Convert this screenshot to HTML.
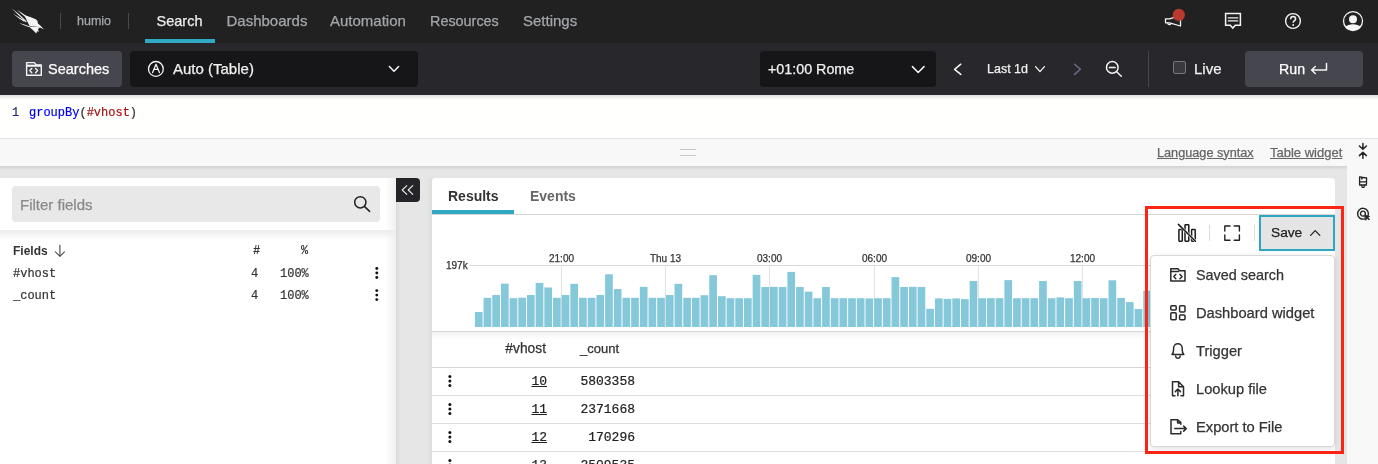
<!DOCTYPE html>
<html><head><meta charset="utf-8">
<style>
*{box-sizing:border-box;margin:0;padding:0}
html,body{width:1378px;height:464px;overflow:hidden;background:#e6e6e6;font-family:"Liberation Sans",sans-serif}
body{will-change:transform}
.a{position:absolute}
.t{position:absolute;line-height:1;white-space:pre;-webkit-text-stroke:0.25px currentColor}
.m{font-family:"Liberation Mono",monospace;-webkit-text-stroke:0.2px currentColor}
.b{font-weight:bold;-webkit-text-stroke:0}
svg{position:absolute;overflow:visible}
</style></head><body>

<!-- TOP NAV -->
<div class="a" style="left:0;top:0;width:1378px;height:43px;background:#212121"></div>
<svg style="left:0;top:0" width="60" height="43" viewBox="0 0 60 43">
  <g fill="#f4f4f4">
    <path d="M11.8 8.6 Q19 13.5 26.8 21.4 L25.9 22.3 Q18.3 15.2 11.8 8.6 Z"/>
    <path d="M16.8 9.8 Q22.5 13 28 17.3 L27 18.4 Q21.7 14.2 16.8 9.8 Z"/>
    <path d="M13 13.4 Q19 17.2 25 20.8 L24.2 21.8 Q18.2 18.2 13 13.4 Z"/>
    <path d="M24.2 15 Q30.5 16.8 35.8 19.2 Q38.2 20.8 37.9 23.4 Q41 25.6 44 29.4 Q41 28 38.4 27 L29.6 26 Q27.2 21.5 24.2 15 Z"/>
    <path d="M28.8 26.6 L40.2 27.2 Q38.2 28.4 38 29.8 L39 31.8 L37 31.2 L36.3 33.6 Q33 30 28.8 26.6 Z"/>
    <path d="M19 23 Q24.5 24.4 29.8 26.4 L29.3 27.3 Q24 25.6 19 23 Z"/>
  </g>
</svg>
<div class="a" style="left:60px;top:13px;width:1px;height:16px;background:#4a4a4a"></div>
<div class="t" style="left:77px;top:15px;font-size:12.5px;color:#a4a7ab">humio</div>
<div class="a" style="left:128px;top:13px;width:1px;height:16px;background:#4a4a4a"></div>
<div class="t" style="left:156.5px;top:13.6px;font-size:14.5px;color:#ececec">Search</div>
<div class="t" style="left:226.5px;top:13.2px;font-size:15px;color:#a4a7ab">Dashboards</div>
<div class="t" style="left:330px;top:13.2px;font-size:15px;color:#a4a7ab">Automation</div>
<div class="t" style="left:430px;top:14px;font-size:14.4px;color:#a4a7ab">Resources</div>
<div class="t" style="left:523px;top:13.2px;font-size:15px;color:#a4a7ab">Settings</div>
<div class="a" style="left:145px;top:39px;width:70px;height:4px;background:#30a9c4"></div>

<!-- TOOLBAR -->
<div class="a" style="left:0;top:43px;width:1378px;height:52px;background:#28282c"></div>
<div class="a" style="left:12px;top:51px;width:110px;height:36px;border-radius:4px;background:#46464f"></div>
<div class="t" style="left:48px;top:62.3px;font-size:14.5px;color:#fff">Searches</div>
<div class="a" style="left:130px;top:51px;width:288px;height:36px;border-radius:4px;background:#161618"></div>
<div class="t" style="left:173px;top:61px;font-size:15px;color:#f0f0f0">Auto (Table)</div>
<div class="a" style="left:760px;top:51px;width:176px;height:36px;border-radius:4px;background:#161618"></div>
<div class="t" style="left:768px;top:62px;font-size:14.3px;color:#f0f0f0">+01:00 Rome</div>
<div class="t" style="left:987px;top:63px;font-size:12.5px;color:#f0f0f0">Last 1d</div>
<div class="a" style="left:1148px;top:51px;width:1px;height:36px;background:#46464c"></div>
<div class="a" style="left:1173px;top:61px;width:13px;height:13px;border-radius:2px;border:1px solid #77777c;background:#3a3a3e"></div>
<div class="t" style="left:1194px;top:61px;font-size:15px;color:#f0f0f0">Live</div>
<div class="a" style="left:1245px;top:51px;width:118px;height:36px;border-radius:4px;background:#46464f"></div>
<div class="t" style="left:1279px;top:61.5px;font-size:14.2px;color:#fff">Run</div>

<svg style="left:0;top:0" width="1378" height="95" viewBox="0 0 1378 95" fill="none" stroke="#f4f4f4" stroke-width="1.4" stroke-linecap="round" stroke-linejoin="round">
  <!-- megaphone -->
  <path d="M1165.5 18.8 L1169.5 18.8 L1180.5 15.5 L1180.5 26 L1169.5 22.8 L1165.5 22.8 Z" stroke-width="1.3"/>
  <path d="M1167.8 23 C1167.8 25.2 1170.8 25.2 1170.8 23.5" stroke-width="1.2"/>
  <circle cx="1178.8" cy="14.9" r="6.1" fill="#bc392e" stroke="none"/>
  <!-- message -->
  <path d="M1225.6 13.5 H1240.4 V25.2 H1235.3 L1232.8 28 L1230.3 25.2 H1225.6 Z" stroke-width="1.5" stroke-linejoin="miter"/>
  <path d="M1228.3 17.9 H1237.7 M1228.3 20.9 H1237.7" stroke-width="1.3"/>
  <!-- help -->
  <circle cx="1293" cy="21" r="7.4" stroke-width="1.4"/>
  <path d="M1290.6 19.2 C1290.6 17.6 1291.7 16.6 1293.1 16.6 C1294.6 16.6 1295.6 17.6 1295.6 18.9 C1295.6 20.6 1293.2 20.8 1293.2 22.8" stroke-width="1.5" stroke-linecap="butt"/>
  <circle cx="1293.2" cy="25" r="0.9" fill="#f4f4f4" stroke="none"/>
  <!-- user -->
  <circle cx="1353" cy="21.1" r="9.5" stroke-width="1.3"/>
  <circle cx="1353" cy="19.3" r="4" fill="#f4f4f4" stroke="none"/>
  <path d="M1345.2 26.8 C1347 25 1349.8 24.2 1353 24.2 C1356.2 24.2 1359 25 1360.8 26.8 C1359 29.4 1356.2 30.6 1353 30.6 C1349.8 30.6 1347 29.4 1345.2 26.8 Z" fill="#f4f4f4" stroke="none"/>
  <!-- folder code -->
  <path d="M26.6 62.6 H34.4 L36.2 64.9 H41.3 V75.3 H26.6 Z" stroke-width="1.4"/>
  <path d="M27 65.7 H40.9" stroke-width="2.1" stroke-linecap="butt"/>
  <path d="M31.8 68.5 L29.8 70.6 L31.8 72.7 M35.6 68.5 L37.6 70.6 L35.6 72.7" stroke-width="1.4"/>
  <!-- circle A -->
  <circle cx="155.9" cy="68.9" r="7.4" stroke-width="1.3"/>
  <path d="M152.6 72.6 L156 64.3 L159.4 72.6 M153.9 69.4 H158.1" stroke-width="1.3"/>
  <!-- chevrons -->
  <path d="M389.4 66.5 L394 71.3 L398.6 66.5" stroke-width="1.5"/>
  <path d="M912.4 66.6 L918.2 72.5 L924 66.6" stroke-width="1.5"/>
  <path d="M960.8 64.2 L954.6 69.3 L960.8 74.4" stroke-width="1.5"/>
  <path d="M1035.6 66.6 L1040 71.6 L1044.4 66.6" stroke-width="1.3"/>
  <path d="M1074.6 64.2 L1080.4 69.3 L1074.6 74.4" stroke="#6b6a8c" stroke-width="1.5"/>
  <!-- zoom out -->
  <circle cx="1112.3" cy="67.4" r="5.8" stroke-width="1.5"/>
  <path d="M1109.4 67.4 H1115.2 M1116.6 71.8 L1121.3 76.2" stroke-width="1.5"/>
  <!-- enter -->
  <path d="M1326.5 63.5 V70 H1311.8 M1315.3 66.5 L1311.6 70 L1315.3 73.5" stroke-width="1.5"/>
</svg>

<!-- EDITOR -->
<div class="a" style="left:0;top:95px;width:1378px;height:43px;background:#fffffe"></div>
<div class="t m" style="left:12px;top:107px;font-size:12px;color:#1b2a5c">1</div>
<div class="t m" style="left:29px;top:107px;font-size:12px;color:#333"><span style="color:#0000f5">groupBy</span>(<span style="color:#a31515">#vhost</span>)</div>

<div class="a" style="left:0;top:95px;width:1378px;height:5px;background:linear-gradient(rgba(0,0,0,0.13),rgba(0,0,0,0))"></div>

<!-- BAND -->
<div class="a" style="left:0;top:138px;width:1378px;height:28px;background:#f8f8f8;border-top:1px solid #e4e4e4"></div>
<div class="a" style="left:0;top:166px;width:1347px;height:4px;background:linear-gradient(rgba(0,0,0,0.09),rgba(0,0,0,0))"></div>
<div class="a" style="left:1347px;top:166px;width:31px;height:298px;background:#f8f8f8"></div>
<div class="a" style="left:680px;top:149px;width:16px;height:1px;background:#c8c8c8"></div>
<div class="a" style="left:680px;top:155px;width:16px;height:1px;background:#c8c8c8"></div>
<div class="t" style="left:1157px;top:146.8px;font-size:12.7px;text-underline-offset:0.6px;color:#666;text-decoration:underline">Language syntax</div>
<div class="t" style="left:1270px;top:145.6px;font-size:13px;text-underline-offset:0.6px;color:#666;text-decoration:underline">Table widget</div>

<!-- LEFT PANEL -->
<div class="a" style="left:396px;top:178px;width:36px;height:286px;background:linear-gradient(90deg,#dadada,#e6e6e6 5px,#e6e6e6 31px,#dcdcdc)"></div>
<div class="a" style="left:0;top:178px;width:396px;height:286px;background:linear-gradient(90deg,#fff 385px,#f1f1f1)"></div>
<div class="a" style="left:12px;top:186px;width:368px;height:36px;border-radius:4px;background:#e8e8e8"></div>
<div class="t" style="left:20px;top:197px;font-size:15px;color:#8a8a8a">Filter fields</div>
<div class="b t" style="left:13px;top:245px;font-size:12px;color:#333">Fields</div>
<div class="b t m" style="left:253px;top:245px;font-size:12px;color:#333">#</div>
<div class="b t m" style="left:301px;top:245px;font-size:12px;color:#333">%</div>
<div class="t m" style="left:13px;top:268px;font-size:12px;color:#333">#vhost</div>
<div class="t m" style="left:251px;top:268px;font-size:12px;color:#333">4</div>
<div class="t m" style="left:280px;top:268px;font-size:12px;color:#333">100%</div>
<div class="t m" style="left:13px;top:290px;font-size:12px;color:#333">_count</div>
<div class="t m" style="left:251px;top:290px;font-size:12px;color:#333">4</div>
<div class="t m" style="left:280px;top:290px;font-size:12px;color:#333">100%</div>
<div class="a" style="left:396px;top:178px;width:24px;height:24px;border-radius:0 4px 4px 0;background:#252529"></div>

<!-- CARD -->
<div class="a" style="left:432px;top:178px;width:903px;height:290px;border-radius:4px;background:#fff"></div>
<div class="b t" style="left:448px;top:189px;font-size:14px;color:#333">Results</div>
<div class="b t" style="left:530px;top:189px;font-size:14px;color:#666">Events</div>
<div class="a" style="left:432px;top:214px;width:903px;height:1px;background:#d6d6d6"></div>
<div class="a" style="left:432px;top:210px;width:82px;height:4px;background:#30a9c4"></div>


<!-- left panel extras -->
<div class="a" style="left:0;top:230px;width:396px;height:10px;background:linear-gradient(#ececec,rgba(255,255,255,0))"></div>
<svg style="left:0;top:0" width="1378" height="464" viewBox="0 0 1378 464" fill="none" stroke-linecap="round" stroke-linejoin="round">
  <circle cx="360.3" cy="202.3" r="5.6" stroke="#222" stroke-width="1.5"/>
  <path d="M364.4 206.4 L369.6 211.4" stroke="#222" stroke-width="1.5"/>
  <path d="M406.8 185.6 L402.2 190 L406.8 194.4 M412.8 185.6 L408.2 190 L412.8 194.4" stroke="#f0f0f0" stroke-width="1.05"/>
  <path d="M59.9 245.3 V256 M55.4 251.8 L59.9 256.3 L64.4 251.8" stroke="#555" stroke-width="1.2"/>
  <g fill="#111" stroke="none">
    <circle cx="376.8" cy="268.5" r="1.45"/><circle cx="376.8" cy="273" r="1.45"/><circle cx="376.8" cy="277.5" r="1.45"/>
    <circle cx="376.8" cy="290.6" r="1.45"/><circle cx="376.8" cy="295.1" r="1.45"/><circle cx="376.8" cy="299.6" r="1.45"/>
  </g>
</svg>

<!-- CHART -->
<svg style="left:0;top:0" width="1378" height="464" viewBox="0 0 1378 464">
  <path d="M470 265.5 H1335" stroke="#d9d9d9" stroke-width="1"/>
  <g stroke="#e2e2e2" stroke-width="1">
    <path d="M561.5 265 V327 M665.5 265 V327 M769.5 265 V327 M874.5 265 V327 M978.5 265 V327 M1082.5 265 V327"/>
  </g>
  <g fill="#85c8d9">
<rect x="474.90" y="312.0" width="7.7" height="15.0"/>
<rect x="483.58" y="297.8" width="7.7" height="29.2"/>
<rect x="492.26" y="295.0" width="7.7" height="32.0"/>
<rect x="500.94" y="283.6" width="7.7" height="43.4"/>
<rect x="509.62" y="298.2" width="7.7" height="28.8"/>
<rect x="518.30" y="297.7" width="7.7" height="29.3"/>
<rect x="526.98" y="295.0" width="7.7" height="32.0"/>
<rect x="535.66" y="282.9" width="7.7" height="44.1"/>
<rect x="544.34" y="287.5" width="7.7" height="39.5"/>
<rect x="553.02" y="297.8" width="7.7" height="29.2"/>
<rect x="561.70" y="295.0" width="7.7" height="32.0"/>
<rect x="570.38" y="283.8" width="7.7" height="43.2"/>
<rect x="579.06" y="297.8" width="7.7" height="29.2"/>
<rect x="587.74" y="297.8" width="7.7" height="29.2"/>
<rect x="596.42" y="295.0" width="7.7" height="32.0"/>
<rect x="605.10" y="274.3" width="7.7" height="52.7"/>
<rect x="613.78" y="289.0" width="7.7" height="38.0"/>
<rect x="622.46" y="297.8" width="7.7" height="29.2"/>
<rect x="631.14" y="297.8" width="7.7" height="29.2"/>
<rect x="639.82" y="286.8" width="7.7" height="40.2"/>
<rect x="648.50" y="297.8" width="7.7" height="29.2"/>
<rect x="657.18" y="297.8" width="7.7" height="29.2"/>
<rect x="665.86" y="295.0" width="7.7" height="32.0"/>
<rect x="674.54" y="283.8" width="7.7" height="43.2"/>
<rect x="683.22" y="297.8" width="7.7" height="29.2"/>
<rect x="691.90" y="297.8" width="7.7" height="29.2"/>
<rect x="700.58" y="295.2" width="7.7" height="31.8"/>
<rect x="709.26" y="275.2" width="7.7" height="51.8"/>
<rect x="717.94" y="296.2" width="7.7" height="30.8"/>
<rect x="726.62" y="298.2" width="7.7" height="28.8"/>
<rect x="735.30" y="298.2" width="7.7" height="28.8"/>
<rect x="743.98" y="298.2" width="7.7" height="28.8"/>
<rect x="752.66" y="274.8" width="7.7" height="52.2"/>
<rect x="761.34" y="287.0" width="7.7" height="40.0"/>
<rect x="770.02" y="286.8" width="7.7" height="40.2"/>
<rect x="778.70" y="287.0" width="7.7" height="40.0"/>
<rect x="787.38" y="271.9" width="7.7" height="55.1"/>
<rect x="796.06" y="287.0" width="7.7" height="40.0"/>
<rect x="804.74" y="291.6" width="7.7" height="35.4"/>
<rect x="813.42" y="298.2" width="7.7" height="28.8"/>
<rect x="822.10" y="287.0" width="7.7" height="40.0"/>
<rect x="830.78" y="298.2" width="7.7" height="28.8"/>
<rect x="839.46" y="298.2" width="7.7" height="28.8"/>
<rect x="848.14" y="298.2" width="7.7" height="28.8"/>
<rect x="856.82" y="298.2" width="7.7" height="28.8"/>
<rect x="865.50" y="298.4" width="7.7" height="28.6"/>
<rect x="874.18" y="298.2" width="7.7" height="28.8"/>
<rect x="882.86" y="298.2" width="7.7" height="28.8"/>
<rect x="891.54" y="277.1" width="7.7" height="49.9"/>
<rect x="900.22" y="287.0" width="7.7" height="40.0"/>
<rect x="908.90" y="286.8" width="7.7" height="40.2"/>
<rect x="917.58" y="287.0" width="7.7" height="40.0"/>
<rect x="926.26" y="308.8" width="7.7" height="18.2"/>
<rect x="934.94" y="298.4" width="7.7" height="28.6"/>
<rect x="943.62" y="298.8" width="7.7" height="28.2"/>
<rect x="952.30" y="298.4" width="7.7" height="28.6"/>
<rect x="960.98" y="299.1" width="7.7" height="27.9"/>
<rect x="969.66" y="281.0" width="7.7" height="46.0"/>
<rect x="978.34" y="298.2" width="7.7" height="28.8"/>
<rect x="987.02" y="298.2" width="7.7" height="28.8"/>
<rect x="995.70" y="298.2" width="7.7" height="28.8"/>
<rect x="1004.38" y="280.1" width="7.7" height="46.9"/>
<rect x="1013.06" y="298.2" width="7.7" height="28.8"/>
<rect x="1021.74" y="298.2" width="7.7" height="28.8"/>
<rect x="1030.42" y="298.2" width="7.7" height="28.8"/>
<rect x="1039.10" y="281.0" width="7.7" height="46.0"/>
<rect x="1047.78" y="298.2" width="7.7" height="28.8"/>
<rect x="1056.46" y="297.4" width="7.7" height="29.6"/>
<rect x="1065.14" y="298.2" width="7.7" height="28.8"/>
<rect x="1073.82" y="281.0" width="7.7" height="46.0"/>
<rect x="1082.50" y="298.2" width="7.7" height="28.8"/>
<rect x="1091.18" y="298.0" width="7.7" height="29.0"/>
<rect x="1099.86" y="298.2" width="7.7" height="28.8"/>
<rect x="1108.54" y="280.3" width="7.7" height="46.7"/>
<rect x="1117.22" y="297.9" width="7.7" height="29.1"/>
<rect x="1125.90" y="302.1" width="7.7" height="24.9"/>
<rect x="1134.58" y="309.0" width="7.7" height="18.0"/>
<rect x="1143.26" y="290.6" width="7.7" height="36.4"/>
  </g>
  <path d="M432 331.5 H1335" stroke="#d4d4d4" stroke-width="1"/>
</svg>
<div class="t" style="left:446px;top:261px;font-size:10px;color:#333">197k</div>
<div class="t" style="left:521.5px;top:254px;width:80px;text-align:center;font-size:10px;color:#333">21:00</div>
<div class="t" style="left:625.5px;top:254px;width:80px;text-align:center;font-size:10px;color:#333">Thu 13</div>
<div class="t" style="left:729.5px;top:254px;width:80px;text-align:center;font-size:10px;color:#333">03:00</div>
<div class="t" style="left:834.5px;top:254px;width:80px;text-align:center;font-size:10px;color:#333">06:00</div>
<div class="t" style="left:938.5px;top:254px;width:80px;text-align:center;font-size:10px;color:#333">09:00</div>
<div class="t" style="left:1042.5px;top:254px;width:80px;text-align:center;font-size:10px;color:#333">12:00</div>

<!-- TABLE -->
<div class="a" style="left:432px;top:332px;width:903px;height:8px;background:linear-gradient(#f2f2f2,rgba(255,255,255,0))"></div>
<div class="t" style="left:445px;top:342px;width:101px;text-align:right;font-size:13.8px;color:#333">#vhost</div>
<div class="t" style="left:580px;top:342px;font-size:13px;color:#333">_count</div>
<div class="a" style="left:432px;top:367px;width:903px;height:1px;background:#d6d6d6"></div>
<div class="a" style="left:432px;top:395px;width:903px;height:1px;background:#dedede"></div>
<div class="a" style="left:432px;top:423px;width:903px;height:1px;background:#dedede"></div>
<div class="a" style="left:432px;top:451px;width:903px;height:1px;background:#dedede"></div>
<svg style="left:0;top:0" width="1378" height="464" viewBox="0 0 1378 464">
  <g fill="#111">
    <circle cx="449.9" cy="376.6" r="1.5"/><circle cx="449.9" cy="381" r="1.5"/><circle cx="449.9" cy="385.4" r="1.5"/>
    <circle cx="449.9" cy="404.6" r="1.5"/><circle cx="449.9" cy="409" r="1.5"/><circle cx="449.9" cy="413.4" r="1.5"/>
    <circle cx="449.9" cy="432.6" r="1.5"/><circle cx="449.9" cy="437" r="1.5"/><circle cx="449.9" cy="441.4" r="1.5"/>
    <circle cx="449.9" cy="460.6" r="1.5"/><circle cx="449.9" cy="465" r="1.5"/><circle cx="449.9" cy="469.4" r="1.5"/>
  </g>
</svg>
<div class="t m" style="left:446px;top:375px;width:101px;text-align:right;font-size:13px;color:#222;text-decoration:underline">10</div>
<div class="t m" style="left:580px;top:375px;width:55px;text-align:right;font-size:13px;color:#222">5803358</div>
<div class="t m" style="left:446px;top:403px;width:101px;text-align:right;font-size:13px;color:#222;text-decoration:underline">11</div>
<div class="t m" style="left:580px;top:403px;width:55px;text-align:right;font-size:13px;color:#222">2371668</div>
<div class="t m" style="left:446px;top:431px;width:101px;text-align:right;font-size:13px;color:#222;text-decoration:underline">12</div>
<div class="t m" style="left:580px;top:431px;width:55px;text-align:right;font-size:13px;color:#222">170296</div>
<div class="t m" style="left:446px;top:459px;width:101px;text-align:right;font-size:13px;color:#222;text-decoration:underline">13</div>
<div class="t m" style="left:580px;top:459px;width:55px;text-align:right;font-size:13px;color:#222">2509535</div>

<!-- SAVE TOOLBAR -->
<div class="a" style="left:1150px;top:215px;width:185px;height:40px;background:linear-gradient(90deg,rgba(255,255,255,0),#fff 40px)"></div>
<div class="a" style="left:1209px;top:225px;width:1px;height:16px;background:#dcdcdc"></div>
<div class="a" style="left:1254px;top:225px;width:1px;height:16px;background:#dcdcdc"></div>
<div class="a" style="left:1259px;top:215px;width:76px;height:36px;border:2px solid #2ea6c2;background:#e4e4e4"></div>
<div class="t" style="left:1271px;top:226px;font-size:13.7px;color:#222">Save</div>
<svg style="left:0;top:0" width="1378" height="464" viewBox="0 0 1378 464" fill="none" stroke="#1a1a1a" stroke-width="1.5" stroke-linecap="round" stroke-linejoin="round">
  <rect x="1178.9" y="229.6" width="3.4" height="11.6" rx="0.6"/>
  <rect x="1185" y="224.8" width="3.8" height="16.4" rx="0.6"/>
  <rect x="1191.6" y="229.6" width="3.6" height="11.6" rx="0.6"/>
  <path d="M1178.4 224.4 L1195.4 241.2" stroke="#fff" stroke-width="2.6"/>
  <path d="M1178.4 224.4 L1195.4 241.2"/>
  <path d="M1224.8 231 V226 H1230 M1234.2 226 H1239.4 V231 M1239.4 235 V240.2 H1234.2 M1230 240.2 H1224.8 V235" stroke="#222" stroke-width="1.4"/>
  <path d="M1310.6 235.4 L1315.2 230.6 L1319.8 235.4" stroke="#222" stroke-width="1.3"/>
</svg>


<!-- MENU -->
<div class="a" style="left:1150px;top:255px;width:185px;height:191.5px;border-radius:4px;background:#fff;border:1px solid #d8d8d8;box-shadow:0 2px 6px rgba(0,0,0,0.12)"></div>
<svg style="left:0;top:0" width="1378" height="464" viewBox="0 0 1378 464" fill="none" stroke="#2a2a2a" stroke-width="1.5" stroke-linecap="round" stroke-linejoin="round">
  <path d="M1170.8 268.8 H1178 L1179.6 270.8 H1185 V281 H1170.8 Z"/>
  <path d="M1170.8 271.6 H1178.4"/>
  <path d="M1175.8 274.4 L1173.8 276.6 L1175.8 278.8 M1180 274.4 L1182 276.6 L1180 278.8"/>
  <rect x="1170.8" y="305.8" width="5.4" height="4.2" rx="1"/>
  <rect x="1179.6" y="305.8" width="5.4" height="6.2" rx="1"/>
  <rect x="1170.8" y="312.8" width="5.4" height="7" rx="1"/>
  <rect x="1179.6" y="314.9" width="5.4" height="4.9" rx="1"/>
  <path d="M1172 354.6 C1173.4 353.2 1173.6 351.6 1173.6 349.4 V348.2 C1173.6 345.5 1175.5 343.7 1177.9 343.7 C1180.3 343.7 1182.2 345.5 1182.2 348.2 V349.4 C1182.2 351.6 1182.4 353.2 1183.8 354.6 Z"/>
  <path d="M1175.6 356 C1175.8 357.6 1176.8 358.2 1177.9 358.2 C1179 358.2 1180 357.6 1180.2 356"/>
  <path d="M1175 395.8 H1172.5 V381.8 H1178.6 L1183.5 386.7 V395.8 H1181 M1178.6 381.8 V386.7 H1183.5"/>
  <path d="M1177.9 395.8 V389.2 M1175.3 391.6 L1177.9 389 L1180.5 391.6"/>
  <path d="M1180.8 424.2 V422.4 L1177.6 419.8 H1171 V433.8 H1180.8 V431.5 M1177.6 419.8 V423 H1180.8"/>
  <path d="M1174.8 428.6 H1186.2 M1183.7 426.1 L1186.2 428.6 L1183.7 431.1"/>
</svg>
<div class="t" style="left:1196px;top:267.6px;font-size:14.4px;color:#333">Saved search</div>
<div class="t" style="left:1196px;top:306.4px;font-size:14.7px;color:#333">Dashboard widget</div>
<div class="t" style="left:1196px;top:344.4px;font-size:14.7px;color:#333">Trigger</div>
<div class="t" style="left:1196px;top:382.4px;font-size:14.7px;color:#333">Lookup file</div>
<div class="t" style="left:1196px;top:420.4px;font-size:14.7px;color:#333">Export to File</div>

<!-- RED RECT -->
<div class="a" style="left:1144.5px;top:205.5px;width:199px;height:248px;border:3.5px solid #fb2516"></div>

<!-- RIGHT SIDEBAR ICONS -->
<svg style="left:0;top:0" width="1378" height="464" viewBox="0 0 1378 464" fill="none" stroke="#222" stroke-width="1.5" stroke-linecap="round" stroke-linejoin="round">
  <path d="M1362.9 143.4 V148.6 M1359.4 146 L1362.9 149.2 L1366.4 146 M1362.9 153 V158.3 M1359.4 155.6 L1362.9 152.4 L1366.4 155.6"/>
  <path d="M1359.6 176.8 L1361.8 177.2 L1361.8 179 L1362.6 177.4 L1366.6 178 L1366.4 185 H1359.6 Z" stroke-width="1.3"/>
  <path d="M1359.6 181.8 H1366.4" stroke-width="1.2"/>
  <path d="M1361.6 185.4 L1362.2 187.4 H1364 L1364.6 185.4" stroke-width="1.2"/>
  <path d="M1364.8 218.8 A5.4 5.4 0 1 1 1368.1 215.5" stroke-width="1.4"/>
  <path d="M1363.8 216 A2.5 2.5 0 1 1 1365.3 214.5" stroke-width="1.4"/>
  <path d="M1364.6 215 L1369.6 216.4 L1367.7 217.3 L1369.6 219.2 L1368.8 220 L1366.9 218.1 L1366 220 Z" fill="#222" stroke-width="0.8"/>
</svg>

</body></html>
